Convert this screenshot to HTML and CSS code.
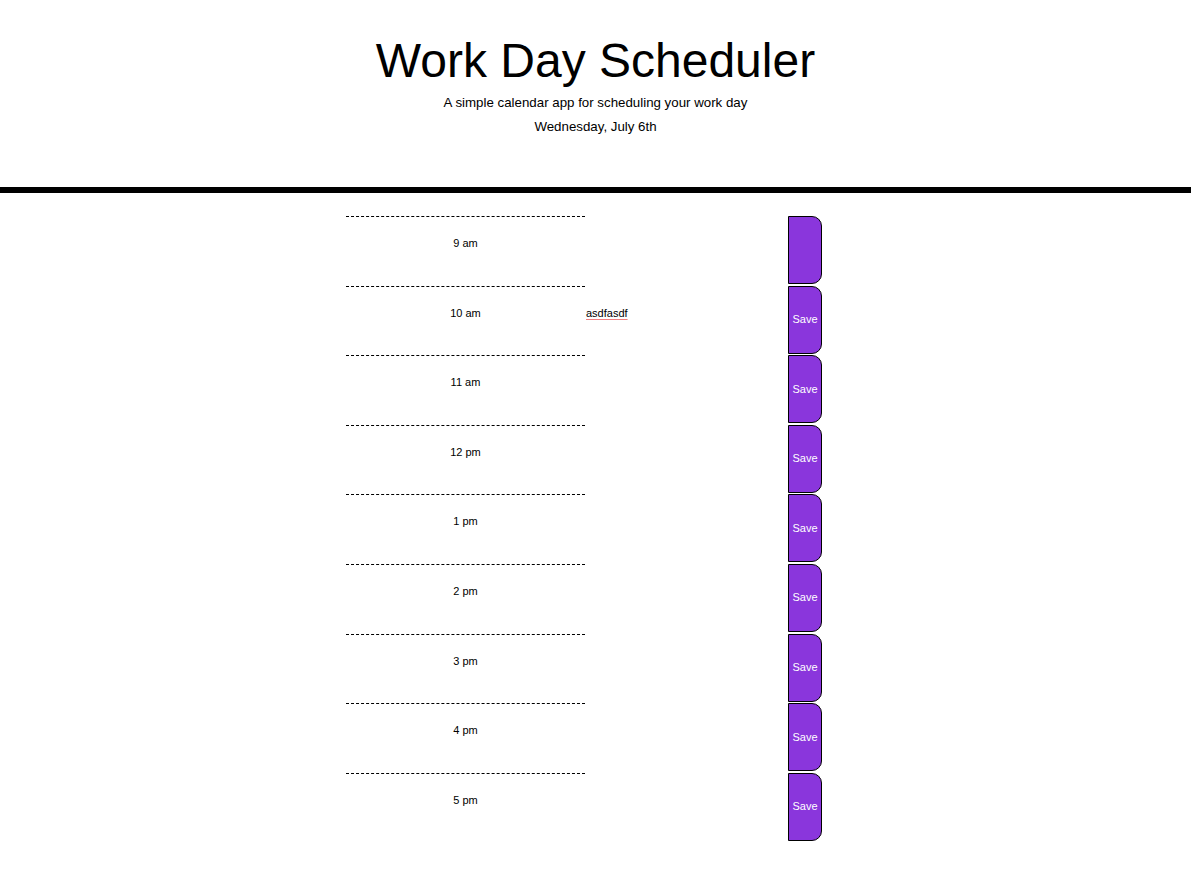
FILE: index.html
```html
<!DOCTYPE html>
<html>
<head>
<meta charset="utf-8">
<title>Work Day Scheduler</title>
<link rel="stylesheet" href="styles.css">
</head>
<body>
<header class="jumbotron">
  <h1 class="title">Work Day Scheduler</h1>
  <p class="lead">A simple calendar app for scheduling your work day</p>
  <p class="lead">Wednesday, July 6th</p>
</header>
<main class="container">
  <div class="row"><div class="hour">9 am</div><div class="desc"></div><button class="saveBtn"></button></div>
  <div class="row"><div class="hour">10 am</div><div class="desc"><span class="typed">asdfasdf</span></div><button class="saveBtn">Save</button></div>
  <div class="row"><div class="hour">11 am</div><div class="desc"></div><button class="saveBtn">Save</button></div>
  <div class="row"><div class="hour">12 pm</div><div class="desc"></div><button class="saveBtn">Save</button></div>
  <div class="row"><div class="hour">1 pm</div><div class="desc"></div><button class="saveBtn">Save</button></div>
  <div class="row"><div class="hour">2 pm</div><div class="desc"></div><button class="saveBtn">Save</button></div>
  <div class="row"><div class="hour">3 pm</div><div class="desc"></div><button class="saveBtn">Save</button></div>
  <div class="row"><div class="hour">4 pm</div><div class="desc"></div><button class="saveBtn">Save</button></div>
  <div class="row"><div class="hour">5 pm</div><div class="desc"></div><button class="saveBtn">Save</button></div>
</main>
</body>
</html>
```
FILE: styles.css
```css
html, body {
  margin: 0;
  padding: 0;
  background: #fff;
  color: #000;
  font-family: "Liberation Sans", Arial, sans-serif;
}

.jumbotron {
  text-align: center;
  padding: 33px 0 48px;
  border-bottom: 6px solid #000;
}

.title {
  margin: 0;
  font-size: 48px;
  line-height: 55px;
  font-weight: 400;
}

.lead {
  margin: 0;
  font-size: 13.3px;
  line-height: 24px;
}

.lead:first-of-type {
  margin-top: 3px;
}

.container {
  margin: 23px 0 0 346px;
  width: 476px;
  display: flex;
  flex-direction: column;
}

.row {
  height: 69.6px;
  display: flex;
  align-items: flex-start;
  font-size: 11px;
  line-height: 13px;
}

.hour {
  width: 239px;
  height: 100%;
  box-sizing: border-box;
  border-top: 1px dashed #000;
  padding-top: 20px;
  text-align: center;
}

.desc {
  width: 203px;
  height: 100%;
  box-sizing: border-box;
  padding: 21px 0 0 1px;
}

.typed {
  text-decoration: underline solid #f08080;
  text-decoration-thickness: 1px;
  text-underline-offset: 2px;
}

.saveBtn {
  width: 34px;
  height: 68px;
  margin: 0;
  padding: 0;
  background: #8a36dc;
  color: #fff;
  border: 1px solid #000;
  border-radius: 0 10px 10px 0;
  font-family: "Liberation Sans", Arial, sans-serif;
  font-size: 11px;
  line-height: 13px;
}
```
